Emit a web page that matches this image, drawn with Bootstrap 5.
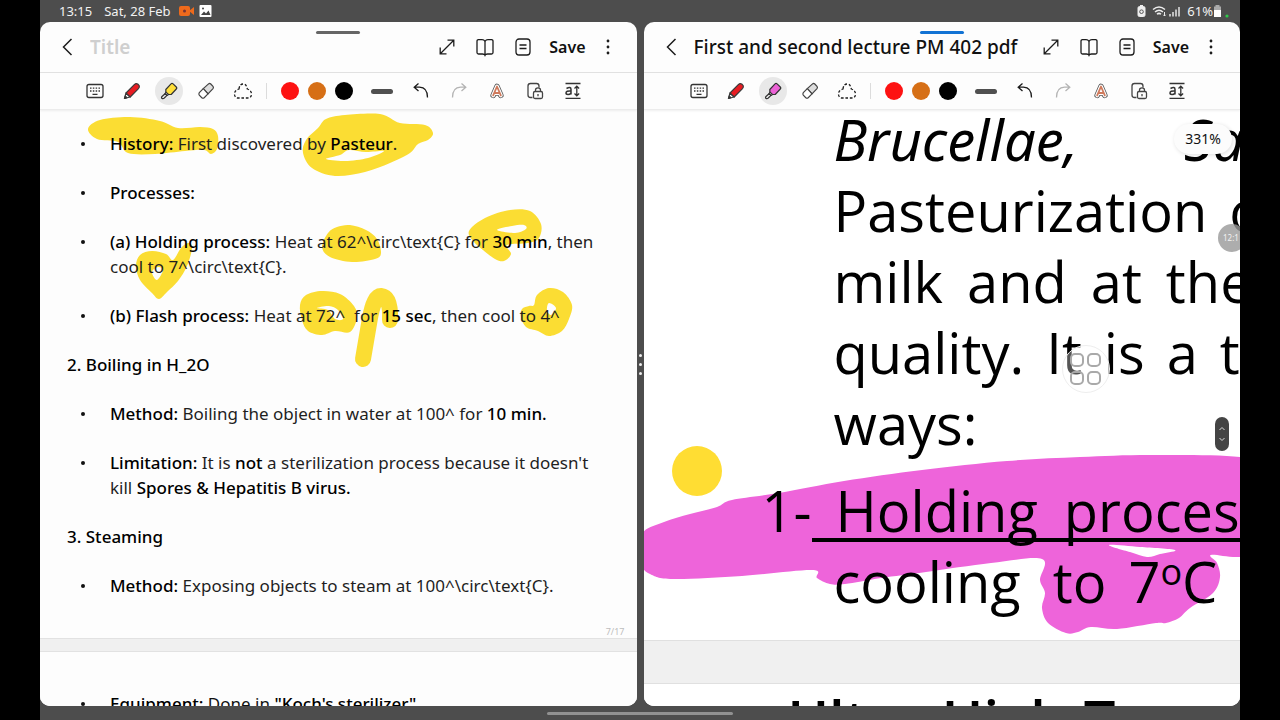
<!DOCTYPE html>
<html lang="en">
<head>
<meta charset="utf-8">
<meta name="viewport" content="width=device-width, initial-scale=1">
<title>Notes – split view</title>
<link href="https://cdn.jsdelivr.net/npm/bootstrap@5.3.0/dist/css/bootstrap.min.css" rel="stylesheet">
<style>
  body { background: #000; font-family: "Noto Sans", sans-serif; color: #111; }
  .tablet { height: 100vh; margin: 0 40px; background: #4d4d4d; overflow: hidden; }
  .status { height: 22px; padding: 0 11px 0 19px; font-size: 13px; line-height: 20px; color: #f2f2f2; }
  .status svg, .tool svg, .head-btn svg { display: block; }
  .split { min-height: 0; }
  .split-gap { width: 7px; flex: none; gap: 6px; }
  .split-gap i { width: 3px; height: 3px; border-radius: 50%; background: #eee; }
  .pane { flex: 1 1 0; min-width: 0; background: #fdfdfd; border-radius: 10px; overflow: hidden; }
  .grip { left: 50%; top: 9px; width: 44px; height: 3px; margin-left: -22px; border-radius: 2px; background: #666; }
  .grip-active { background: #1273d4; }
  .head { height: 51px; padding: 0 15px 0 14px; border-bottom: 1px solid #e2e2e2; }
  .head-btn, .tool { border: 0; padding: 0; background: none; color: #1c1c1c; flex: none; display: flex; align-items: center; justify-content: center; }
  .head-btn { width: 28px; height: 28px; }
  .title-box { border: 0; padding: 0; margin-left: 8px; background: none; flex: 1 1 0; min-width: 0; font-size: 19px; font-weight: 500; color: #111; outline: 0; }
  .title-box::placeholder { color: #cfcfcf; opacity: 1; font-weight: 600; }
  .head-tools { gap: 10px; }
  .save { font-size: 16px; font-weight: 600; line-height: 28px; border: 0; padding: 0 0 0 2px; background: none; color: #111; }
  .tools { height: 37px; padding-left: 41px; border-bottom: 1px solid #ececec; box-shadow: 0 1px 2px #0001; position: relative; z-index: 2; background: #fdfdfd; }
  .pens, .inks { gap: 9px; }
  .tool { width: 28px; height: 28px; border-radius: 50%; }
  .tool-on { background: #e8e8e8; }
  .rule { width: 1px; height: 16px; background: #dcdcdc; margin: 0 14px 0 9px; }
  .ink-dot { width: 18px; height: 18px; border: 0; padding: 0; border-radius: 50%; }
  .ink-red { background: #fd1212; } .ink-orange { background: #d66f16; } .ink-black { background: #000; }
  .thick { width: 22px; margin: 0 14px 0 18px; }
  .thick i { width: 22px; height: 5px; border-radius: 3px; background: #505050; }
  .edits { gap: 10px; }
  .paper { flex: 1 1 0; min-height: 0; overflow: hidden; position: relative; background: #f0f0f0; }
  .sheet { position: relative; background: #fdfdfd; }
  .ink-layer { position: absolute; left: 0; top: 0; pointer-events: none; }
  .ink-yellow { fill: #fbdd33; fill-rule: evenodd; } .ink-pink { fill: #ee64da; fill-rule: evenodd; }
  .note { padding: 21px 30px 0 27px; font-size: 17px; line-height: 25px; color: #1f1f1f; height: 528px; }
  .note > ul, .note > h2, .pdf > .ln { position: relative; }
  .note b, .note h2, .next-note b { font-weight: 500; color: #000; }
  .note h2 { font-size: 17px; line-height: 25px; margin: 0 0 24px; }
  .note ul, .next-note ul { list-style: none; margin: 0; padding-left: 43px; }
  .note li { margin-bottom: 24px; }
  .note li, .next-note li { position: relative; }
  .note li::before, .next-note li::before { content: ""; position: absolute; left: -29px; top: 11px; width: 4px; height: 4px; border-radius: 50%; background: #111; }
  .page-no { position: absolute; right: 12px; bottom: 0; font-size: 9px; line-height: 12px; color: #bdbdbd; }
  .sheet-end { height: 14px; border-top: 1px solid #e2e2e2; border-bottom: 1px solid #e2e2e2; }
  .next-note { height: 120px; padding: 39px 30px 0 27px; font-size: 17px; line-height: 25px; }
  .pdf { height: 530px; background: #fff; padding-left: 190px; font: 56px/71px "Open Sans", sans-serif; color: #000; white-space: nowrap; }
  .ln { display: flex; gap: 24px; height: 71px; }
  .ln-first { margin-top: -6px; gap: 106px; font-family: "Noto Sans", sans-serif; font-style: italic; }
  .ln-tight { gap: 22px; }
  .ln-wide { gap: 32px; }
  .ln-item { gap: 0; margin: 16px 0 0 -72px; }
  .ln-under { position: relative; display: flex; gap: 26px; padding-left: 24px; }
  .ln-under::after { content: ""; position: absolute; left: 0; right: 0; top: 63px; height: 4px; background: #000; }
  .deg { font-size: 36px; line-height: 48px; }
  .pdf-wrap { position: absolute; inset: 0; overflow: hidden; background: #f0f0f0; }
  .pdf-end { height: 44px; border-top: 1px solid #e0e0e0; border-bottom: 1px solid #e0e0e0; }
  .pdf-next { background: #fff; height: 120px; padding-left: 144px; font: 600 56px/71px "Open Sans", sans-serif; color: #000; gap: 18px; white-space: nowrap; }
  .zoom-pill { right: 8px; top: 14px; width: 58px; height: 30px; border-radius: 15px; background: #fcfcfc; box-shadow: 1px 1px 4px #0002; font-size: 14px; line-height: 30px; text-align: center; }
  .clock-dot { right: -6px; top: 114px; width: 28px; height: 28px; border-radius: 50%; background: #999c; color: #f3f3f3; font-size: 8px; line-height: 28px; padding-left: 5px; white-space: nowrap; }
  .scroll-grip { right: 11px; top: 307px; width: 14px; height: 34px; border: 0; padding: 0; border-radius: 7px; background: #444; }
  .scroll-grip svg { display: block; }
  .assist { right: 130px; top: 235px; width: 48px; height: 48px; border: 1px solid #eeeeee; border-radius: 50%; padding: 0; background: #ffffff55; }
  .pointer-dot { left: 28px; top: 336px; width: 50px; height: 50px; border-radius: 50%; background: #ffdd33; }
  .nav-foot { height: 14px; }
  .nav-foot i { width: 186px; height: 3px; border-radius: 2px; background: #919191; }
</style>
</head>
<body>
<svg width="0" height="0" class="position-absolute" aria-hidden="true">
  <defs>
    <g id="i-back" fill="none" stroke="currentColor" stroke-width="1.5"><path d="M15.500 4 7.500 12l8 8"/></g>
    <g id="i-expand" fill="none" stroke="currentColor" stroke-width="1.3"><path d="M5.500 18.500 18.500 5.500M12.500 5.200h6.300v6.300M5.200 12.500v6.300h6.300"/></g>
    <g id="i-book" fill="none" stroke="currentColor" stroke-width="1.3"><path d="M12 6.500Q11 4.700 9 4.700H5.500Q4 4.700 4 6.200V17.500Q4 19 5.500 19H9.500Q11.500 19 12 20.300 12.500 19 14.500 19H18.500Q20 19 20 17.500V6.200Q20 4.700 18.500 4.700H15Q13 4.700 12 6.500V20"/></g>
    <g id="i-page" fill="none" stroke="currentColor" stroke-width="1.3"><rect x="5" y="4" width="14" height="16" rx="3"/><path d="M8.500 10h7M8.500 13.500h7"/></g>
    <g id="i-more" fill="currentColor"><circle cx="12" cy="6" r="1.400"/><circle cx="12" cy="12" r="1.400"/><circle cx="12" cy="18" r="1.400"/></g>
    <g id="i-keys" fill="none" stroke="#333" stroke-width="1.300"><rect x="4" y="5.500" width="16" height="13" rx="2"/><path d="M7 9.200h10M7 12h10" stroke-dasharray="1.500 1.330"/><path d="M9.500 15.300h5"/></g>
    <g id="i-pen" stroke="#3a3a3a" stroke-width="1.200" stroke-linejoin="round"><path d="M4.500 19.500 6 14l4 4Z" fill="#fff"/><path d="M4.500 19.500 5.200 17l1.700 1.700Z" fill="#222"/><path d="M6 14 14.300 5.600Q16 4 17.700 5L19 6.300Q20 8 18.500 9.600L10.200 18Z" fill="#e81c22"/></g>
    <g id="i-mark" stroke="#333" stroke-width="1.200" stroke-linejoin="round"><path d="M8.800 10.500 14 4.900Q15 4 16.100 4.900L19.300 8Q20.300 9 19.300 10L14.200 15.500 10.800 15.300 8.900 13.500Z" fill="var(--tip)"/><path d="M8.900 13.200 8 14.700 10 16.400 11.500 15.400Z" fill="#fff"/><path d="M8 14.700 5 17.500Q4 18.700 5 19.500 6.200 20 7.300 19L10 16.400Z" fill="#eee"/></g>
    <g id="i-erase" stroke="#444" stroke-width="1.200"><path d="M9.300 9.600 14.500 4.900Q15.700 4 16.800 5L19 7.300Q19.900 8.500 19 9.600L14 14.800Z" fill="#ddd"/><path d="M9.300 9.600 5.300 13.700Q4.400 15 5.300 16.200L7.800 18.700Q9 19.500 10.200 18.700L14 14.800Z" fill="#fff"/></g>
    <g id="i-lasso" fill="none" stroke="currentColor" stroke-width="1.300"><path d="M8 10Q8.500 5 12 5 15.500 5 16.300 10 20.500 11.500 20.500 15 20.500 19 16.500 19H7.500Q3.500 19 3.500 15 3.500 11.500 8 10Z" stroke-dasharray="2.600 1.800"/></g>
    <g id="i-undo" fill="none" stroke="currentColor" stroke-width="1.300"><path d="M9.500 4.500 5.200 8.200 9.500 12M5.200 8.200h5.300Q18.500 8.500 18.500 18.500"/></g>
    <g id="i-redo" fill="none" stroke="#b4b4b4" stroke-width="1.300"><path d="M14.500 4.500 18.800 8.200 14.500 12M18.800 8.200h-5.300Q5.500 8.500 5.500 18.500"/></g>
    <g id="i-style" fill="none" stroke-linejoin="round" stroke-linecap="round"><path d="M8.200 16.300 12 7.500l3.800 8.800M9.600 14h4.800" stroke="#555" stroke-width="5.600"/><path d="M8.200 16.300 12 7.500l3.800 8.800M9.600 14h4.800" stroke="#fff" stroke-width="4"/><path d="M8.200 16.300 12 7.500l3.800 8.800M9.600 14h4.800" stroke="#cf7a5c" stroke-width="1.800"/></g>
    <g id="i-lock" fill="none" stroke="#444" stroke-width="1.300"><path d="M9.500 18.500H7.500Q5 18.500 5 16V7Q5 4.500 7.500 4.500H13.500Q16 4.500 16 7V8.500"/><rect x="10.500" y="12.500" width="9" height="7" rx="1.500"/><path d="M12.500 12.500V11Q12.500 8.800 15 8.800T17.500 11V12.500M15 15v2.300"/></g>
    <g id="i-fit" fill="none" stroke="#333" stroke-width="1.300"><path d="M4.500 4.500h15M4.500 19.300h15M15.800 7.300v9.400M13.500 9.500l2.300-2.300 2.300 2.300M13.500 14.500l2.300 2.300 2.300-2.300"/><path d="M5.500 9.500Q10 7 10 10.500V15.500M10 12Q5 11.500 5 14 5 15.500 7 15.500 9 15.500 10 14" stroke-width="1.500"/></g>
  </defs>
</svg>

<div class="tablet d-flex flex-column">
  <div class="status d-flex align-items-center">
    <span>13:15</span><span class="ms-2 ps-1">Sat, 28 Feb</span>
    <svg class="ms-2" width="36" height="16" viewBox="0 0 36 16"><rect x="0" y="3" width="11" height="10" rx="2" fill="#ee6a1c"/><path d="M10 8 15 4v8Z" fill="#ee6a1c"/><circle cx="5.500" cy="8" r="1.500" fill="#733"/><rect x="20.500" y="2" width="12" height="12" rx="1" fill="#fff"/><path d="M22 12 25 8.500l2 2 2.500-3 2 4.500Z" fill="#444"/><circle cx="24" cy="5.500" r="1" fill="#444"/></svg>
    <svg class="ms-auto me-1" width="46" height="16" viewBox="0 0 46 16" fill="none" stroke="#eee"><rect x="1" y="3.500" width="7" height="10" rx="1.500" fill="#eee"/><path d="M3 2.500h3"/><circle cx="4.500" cy="8.700" r="1.800" stroke="#555"/><path d="M16 6.500Q22 1.500 28 6.500M18 9Q22 5.500 26 9M20 11.300Q22 9.500 24 11.300" stroke-width="1.500"/><path d="M27.500 9v4m-1.200-1.200L27.500 13l1.200-1.200"/><path d="M33 11v2.500M36 9v4.500M39 6.500v7M42 4v9.500" stroke-width="1.400"/></svg>
    <span>61%</span>
    <svg width="16" height="16" viewBox="0 0 16 16"><path d="M2.500 2h4v1.500H8V14H1V3.500h1.500Z" fill="#aaa"/><path d="M1 7h7v7H1Z" fill="#fff"/><circle cx="14" cy="13" r="1.600" fill="#2fc94a"/></svg>
  </div>

  <div class="split d-flex flex-grow-1">
    <section class="pane d-flex flex-column position-relative" aria-label="Untitled note">
      <span class="grip position-absolute"></span>
      <header class="head d-flex align-items-center">
        <button class="head-btn" aria-label="Back"><svg width="24" height="24"><use href="#i-back"/></svg></button>
        <input class="title-box" type="text" placeholder="Title" aria-label="Title">
        <div class="head-tools d-flex align-items-center">
          <button class="head-btn" aria-label="Full screen"><svg width="24" height="24"><use href="#i-expand"/></svg></button>
          <button class="head-btn" aria-label="Reading mode"><svg width="24" height="24"><use href="#i-book"/></svg></button>
          <button class="head-btn" aria-label="Pages"><svg width="24" height="24"><use href="#i-page"/></svg></button>
          <button class="save">Save</button>
        </div>
        <button class="head-btn ms-2" aria-label="More"><svg width="24" height="24"><use href="#i-more"/></svg></button>
      </header>
      <div class="tools d-flex align-items-center">
        <div class="pens d-flex">
          <button class="tool" aria-label="Keyboard"><svg width="24" height="24"><use href="#i-keys"/></svg></button>
          <button class="tool" aria-label="Pen"><svg width="24" height="24"><use href="#i-pen"/></svg></button>
          <button class="tool tool-on" aria-label="Highlighter" style="--tip:#ffdf3a"><svg width="24" height="24"><use href="#i-mark"/></svg></button>
          <button class="tool" aria-label="Eraser"><svg width="24" height="24"><use href="#i-erase"/></svg></button>
          <button class="tool" aria-label="Selection"><svg width="24" height="24"><use href="#i-lasso"/></svg></button>
        </div>
        <span class="rule"></span>
        <div class="inks d-flex"><button class="ink-dot ink-red" aria-label="Red"></button><button class="ink-dot ink-orange" aria-label="Orange"></button><button class="ink-dot ink-black" aria-label="Black"></button></div>
        <button class="tool thick" aria-label="Thickness"><i></i></button>
        <div class="edits d-flex">
          <button class="tool" aria-label="Undo"><svg width="24" height="24"><use href="#i-undo"/></svg></button>
          <button class="tool" aria-label="Redo"><svg width="24" height="24"><use href="#i-redo"/></svg></button>
          <button class="tool" aria-label="Handwriting style"><svg width="24" height="24"><use href="#i-style"/></svg></button>
          <button class="tool" aria-label="Lock canvas"><svg width="24" height="24"><use href="#i-lock"/></svg></button>
          <button class="tool" aria-label="Straighten text"><svg width="24" height="24"><use href="#i-fit"/></svg></button>
        </div>
      </div>
      <div class="paper">
        <article class="sheet note">
          <svg class="ink-layer" width="597" height="528" viewBox="40 110 597 528" aria-hidden="true">
            <path class="ink-yellow" data-pts="88,129 100,120 130,117 160,121 178,128 200,127 213,129 218,136 217,149 211,154 204,150 185,151 155,154 128,153 118,142 97,139"/>
            <path class="ink-yellow" data-pts="433,133 428,140 418,144 410,153 390,163 365,172 335,176 312,168 303,153 306,140 318,128 326,119 345,115 380,114 400,123 425,125|326,159 340,155 349,150 366,152 384,151 368,158 345,161"/>
            <path class="ink-yellow" data-pts="322,247 328,233 337,227 350,225 366,230 377,239 381,253 375,259 352,262 330,257"/>
            <path class="ink-yellow" data-pts="469,231 485,218 510,210 530,211 541,224 539,238 528,243 507,245 511,254 504,261 495,259 483,250 474,242|497,230 512,226 524,225 526,229 515,233"/>
            <path class="ink-yellow" data-pts="136,266 140,255 152,251 166,254 173,260 181,248 188,243 192,248 187,266 178,281 167,292 159,299 152,293 140,280|152,272 158,267 163,270 157,280"/>
            <path class="ink-yellow" data-pts="300,305 306,295 322,291 340,294 354,306 357,318 350,332 335,331 322,335 308,331 302,320|317,308 329,306 338,310 343,319 335,319 328,310"/>
            <path d="M363 359 370 318Q374 296 381 296 391 297 390 320" fill="none" stroke="#fbdd33" stroke-width="16" stroke-linecap="round"/>
            <path class="ink-yellow" data-pts="521,317 522,309 529,306 534,305 537,295 549,288 563,292 572,305 569,319 562,331 549,336 538,331 526,327|549,303 556,308 551,315 547,310"/>
          </svg>
          <ul>
            <li><b>History:</b> First discovered by <b>Pasteur</b>.</li>
            <li><b>Processes:</b></li>
            <li><b>(a) Holding process:</b> Heat at 62^\circ\text{C} for <b>30 min</b>, then cool to 7^\circ\text{C}.</li>
            <li><b>(b) Flash process:</b> Heat at 72^&nbsp; for <b>15 sec</b>, then cool to 4^</li>
          </ul>
          <h2>2. Boiling in H_2O</h2>
          <ul>
            <li><b>Method:</b> Boiling the object in water at 100^ for <b>10 min.</b></li>
            <li><b>Limitation:</b> It is <b>not</b> a sterilization process because it doesn't kill <b>Spores &amp; Hepatitis B virus.</b></li>
          </ul>
          <h2>3. Steaming</h2>
          <ul>
            <li><b>Method:</b> Exposing objects to steam at 100^\circ\text{C}.</li>
          </ul>
          <span class="page-no">7/17</span>
        </article>
        <div class="sheet-end"></div>
        <article class="sheet next-note">
          <ul><li><b>Equipment:</b> Done in <b>"Koch's sterilizer"</b></li></ul>
        </article>
      </div>
    </section>

    <div class="split-gap d-flex flex-column align-items-center justify-content-center"><i></i><i></i><i></i></div>

    <section class="pane d-flex flex-column position-relative" aria-label="Lecture PDF">
      <span class="grip grip-active position-absolute"></span>
      <header class="head d-flex align-items-center">
        <button class="head-btn" aria-label="Back"><svg width="24" height="24"><use href="#i-back"/></svg></button>
        <input class="title-box" type="text" value="First and second lecture PM 402 pdf" aria-label="Title">
        <div class="head-tools d-flex align-items-center">
          <button class="head-btn" aria-label="Full screen"><svg width="24" height="24"><use href="#i-expand"/></svg></button>
          <button class="head-btn" aria-label="Reading mode"><svg width="24" height="24"><use href="#i-book"/></svg></button>
          <button class="head-btn" aria-label="Pages"><svg width="24" height="24"><use href="#i-page"/></svg></button>
          <button class="save">Save</button>
        </div>
        <button class="head-btn ms-2" aria-label="More"><svg width="24" height="24"><use href="#i-more"/></svg></button>
      </header>
      <div class="tools d-flex align-items-center">
        <div class="pens d-flex">
          <button class="tool" aria-label="Keyboard"><svg width="24" height="24"><use href="#i-keys"/></svg></button>
          <button class="tool" aria-label="Pen"><svg width="24" height="24"><use href="#i-pen"/></svg></button>
          <button class="tool tool-on" aria-label="Highlighter" style="--tip:#ec62d6"><svg width="24" height="24"><use href="#i-mark"/></svg></button>
          <button class="tool" aria-label="Eraser"><svg width="24" height="24"><use href="#i-erase"/></svg></button>
          <button class="tool" aria-label="Selection"><svg width="24" height="24"><use href="#i-lasso"/></svg></button>
        </div>
        <span class="rule"></span>
        <div class="inks d-flex"><button class="ink-dot ink-red" aria-label="Red"></button><button class="ink-dot ink-orange" aria-label="Orange"></button><button class="ink-dot ink-black" aria-label="Black"></button></div>
        <button class="tool thick" aria-label="Thickness"><i></i></button>
        <div class="edits d-flex">
          <button class="tool" aria-label="Undo"><svg width="24" height="24"><use href="#i-undo"/></svg></button>
          <button class="tool" aria-label="Redo"><svg width="24" height="24"><use href="#i-redo"/></svg></button>
          <button class="tool" aria-label="Handwriting style"><svg width="24" height="24"><use href="#i-style"/></svg></button>
          <button class="tool" aria-label="Lock canvas"><svg width="24" height="24"><use href="#i-lock"/></svg></button>
          <button class="tool" aria-label="Straighten text"><svg width="24" height="24"><use href="#i-fit"/></svg></button>
        </div>
      </div>
      <div class="paper">
        <div class="pdf-wrap">
          <article class="sheet pdf d-flex flex-column">
            <svg class="ink-layer" width="596" height="530" viewBox="644 110 596 530" aria-hidden="true">
              <path class="ink-pink" data-pts="642,534 664,522 690,514 717,507 732,500 779,493 844,481 922,470 1007,461 1080,457 1150,455 1240,457 1280,470 1280,550 1240,557 1211,555 1217,563 1220,577 1213,593 1190,608 1179,618 1166,623 1156,623 1117,629 1091,627 1078,632 1066,633 1048,623 1042,608 1045,593 1040,580 1042,559 991,563 926,572 881,578 845,584 830,584 817,578 812,570 742,576 673,579 650,574 642,564|1109,545 1140,547 1175,550 1160,554 1147,557 1130,552"/>
            </svg>
            <div class="ln ln-first"><span>Brucellae,</span><span>Salmonella</span></div>
            <div class="ln ln-tight"><span>Pasteurization</span><span>of</span></div>
            <div class="ln"><span>milk</span><span>and</span><span>at</span><span>the</span></div>
            <div class="ln ln-tight"><span>quality.</span><span>It</span><span>is</span><span>a</span><span>t</span></div>
            <div class="ln"><span>ways:</span></div>
            <div class="ln ln-item"><span>1-</span><span class="ln-under"><span>Holding</span><span>process</span></span></div>
            <div class="ln ln-wide"><span>cooling</span><span class="ln ln-tight"><span>to</span><span>7<sup class="deg">o</sup>C</span></span></div>
          </article>
          <div class="pdf-end"></div>
          <div class="pdf-next d-flex"><span>Ultra</span><span>High</span><span>Temp</span></div>
        </div>
        <span class="pointer-dot position-absolute"></span>
        <span class="zoom-pill position-absolute">331%</span>
        <span class="clock-dot position-absolute">12:1</span>
        <button class="scroll-grip position-absolute" aria-label="Scroll"><svg width="14" height="34" fill="none" stroke="#ddd"><path d="M4.500 13 7 10.500 9.500 13M4.500 21 7 23.500 9.500 21"/></svg></button>
        <button class="assist position-absolute" aria-label="Assistant menu"><svg class="d-block m-auto" width="34" height="34" fill="none" stroke="#a9a9a9" stroke-width="2"><rect x="2" y="2" width="12" height="12" rx="4"/><rect x="19" y="2" width="12" height="12" rx="4"/><rect x="2" y="20" width="12" height="12" rx="4"/><rect x="19" y="20" width="12" height="12" rx="4"/></svg></button>
      </div>
    </section>
  </div>
  <div class="nav-foot d-flex align-items-center justify-content-center"><i></i></div>
</div>

<script src="https://cdn.jsdelivr.net/npm/bootstrap@5.3.0/dist/js/bootstrap.bundle.min.js"></script>
<script>
  // Turns each list of outline points into a closed, smooth marker shape.
  document.querySelectorAll('[data-pts]').forEach(function (el) {
    el.setAttribute('d', el.dataset.pts.split('|').map(function (loop) {
      var p = loop.trim().split(' ').map(function (s) { return s.split(',').map(Number); });
      var n = p.length, d = 'M' + p[0];
      for (var i = 0; i < n; i++) {
        var a = p[(i + n - 1) % n], b = p[i], c = p[(i + 1) % n], e = p[(i + 2) % n];
        d += 'C' + [b[0] + (c[0] - a[0]) / 6, b[1] + (c[1] - a[1]) / 6, c[0] - (e[0] - b[0]) / 6, c[1] - (e[1] - b[1]) / 6, c[0], c[1]];
      }
      return d + 'Z';
    }).join(''));
  });
</script>
</body>
</html>
